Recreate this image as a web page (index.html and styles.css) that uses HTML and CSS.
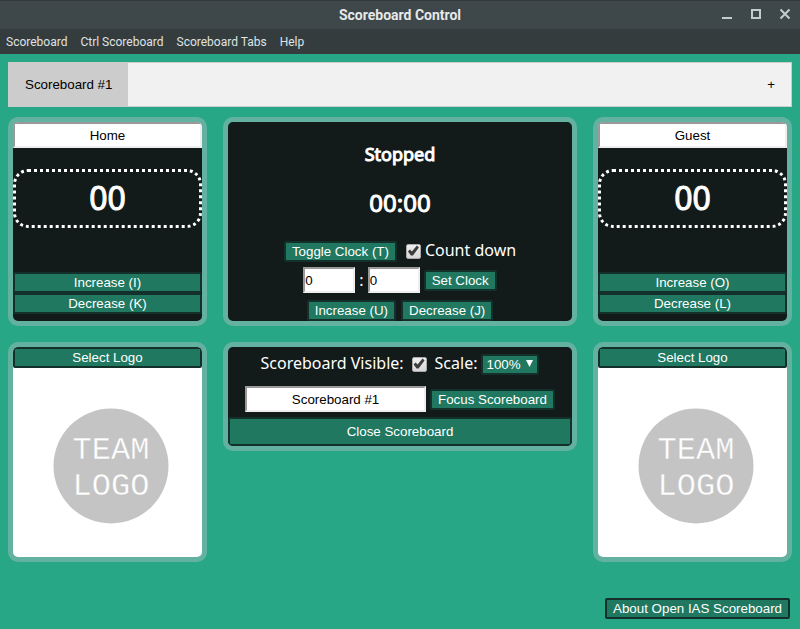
FILE: index.html
```
<!DOCTYPE html>
<html lang="en">
<head>
<meta charset="utf-8">
<title>Scoreboard Control</title>
<link rel="stylesheet" href="styles.css">
</head>
<body>
<header class="titlebar">
  <h1 class="window-title">Scoreboard Control</h1>
  <div class="window-buttons">
    <button type="button" aria-label="Minimize"><svg width="12" height="12" viewBox="0 0 12 12"><path d="M1 10h10" /></svg></button>
    <button type="button" aria-label="Maximize"><svg width="12" height="12" viewBox="0 0 12 12"><path d="M2 2h8v8H2z" /></svg></button>
    <button type="button" aria-label="Close"><svg width="12" height="12" viewBox="0 0 12 12"><path d="M1.5 1.5l9 9M10.5 1.5l-9 9" /></svg></button>
  </div>
</header>
<nav class="menubar">
  <a href="#">Scoreboard</a>
  <a href="#">Ctrl Scoreboard</a>
  <a href="#">Scoreboard Tabs</a>
  <a href="#">Help</a>
</nav>
<main class="content">
  <div class="tabs">
    <button type="button" class="tab active">Scoreboard #1</button>
    <button type="button" class="tab">+</button>
  </div>
  <div class="board">
    <section class="card team">
      <input class="field name" type="text" value="Home" aria-label="Home team name">
      <div class="score">00</div>
      <button type="button" class="btn">Increase (I)</button>
      <button type="button" class="btn">Decrease (K)</button>
    </section>
    <section class="card clock">
      <h3 class="status">Stopped</h3>
      <h2 class="time">00:00</h2>
      <div class="row toggle-row">
        <button type="button" class="btn">Toggle Clock (T)</button>
        <label class="check-label"><input type="checkbox" class="check" checked><span class="label-text">Count down</span></label>
      </div>
      <div class="row set-row">
        <input class="field digits" type="text" value="0" aria-label="Minutes">
        <span>:</span>
        <input class="field digits" type="text" value="0" aria-label="Seconds">
        <button type="button" class="btn">Set Clock</button>
      </div>
      <div class="row step-row">
        <button type="button" class="btn">Increase (U)</button>
        <button type="button" class="btn">Decrease (J)</button>
      </div>
    </section>
    <section class="card team">
      <input class="field name" type="text" value="Guest" aria-label="Guest team name">
      <div class="score">00</div>
      <button type="button" class="btn">Increase (O)</button>
      <button type="button" class="btn">Decrease (L)</button>
    </section>
    <section class="card logo">
      <button type="button" class="btn">Select Logo</button>
      <svg class="logo-image" viewBox="0 0 189 189" role="img" aria-label="Home team logo">
        <circle cx="98" cy="98" r="57.5" />
        <text x="98" y="91">TEAM</text>
        <text x="98" y="127">LOGO</text>
      </svg>
    </section>
    <section class="card view">
      <div class="row view-row">
        <label class="label-text" for="visible">Scoreboard Visible:</label>
        <input type="checkbox" class="check" id="visible" checked>
        <span class="scale">
          <label class="label-text" for="scale">Scale:</label>
          <span class="select-wrap">
            <select id="scale" class="btn"><option>100%</option></select>
            <svg width="7" height="7" viewBox="0 0 7 7"><path d="M0 0h7L3.5 7z" /></svg>
          </span>
        </span>
      </div>
      <div class="row focus-row">
        <input class="field label-field" type="text" value="Scoreboard #1" aria-label="Scoreboard name">
        <button type="button" class="btn">Focus Scoreboard</button>
      </div>
      <button type="button" class="btn close">Close Scoreboard</button>
    </section>
    <section class="card logo">
      <button type="button" class="btn">Select Logo</button>
      <svg class="logo-image" viewBox="0 0 189 189" role="img" aria-label="Guest team logo">
        <circle cx="98" cy="98" r="57.5" />
        <text x="98" y="91">TEAM</text>
        <text x="98" y="127">LOGO</text>
      </svg>
    </section>
  </div>
</main>
<footer class="footer">
  <button type="button" class="btn">About Open IAS Scoreboard</button>
</footer>
</body>
</html>
```
FILE: styles.css
```
* {
  box-sizing: border-box;
}

body {
  margin: 0;
  min-height: 100vh;
  display: flex;
  flex-direction: column;
  background: #27a786;
  color: #fff;
  font: 16px/22px "Noto Sans", sans-serif;
}

button,
input,
select {
  margin: 0;
  font-family: "Liberation Sans", Arial, sans-serif;
}

.titlebar {
  display: grid;
  grid-template-columns: 1fr auto 1fr;
  align-items: center;
  height: 29px;
  padding: 0 9px;
  background: #3e4749;
  border-top: 1px solid #33393b;
}

.window-title {
  grid-column: 2;
  margin: 0;
  font: bold 14px/28px Roboto, sans-serif;
  color: #e6e9e9;
}

.window-buttons {
  display: flex;
  justify-content: flex-end;
  gap: 17px;
}

.window-buttons button {
  display: flex;
  padding: 0 0 2px;
  border: 0;
  background: none;
}

.window-buttons path {
  fill: none;
  stroke: #c3cdd0;
  stroke-width: 2;
}

.menubar {
  display: flex;
  gap: 13px;
  height: 25px;
  padding: 0 6px;
  background: #353c3e;
  font: 12px/26px Roboto, sans-serif;
}

.menubar a {
  color: #dfe3e3;
  text-decoration: none;
}

.content {
  padding: 8px 8px 0;
}

.tabs {
  display: flex;
  justify-content: space-between;
  height: 45px;
  margin-bottom: 10px;
  background: #f1f1f1;
  border: 1px solid #ccc;
}

.tab {
  padding: 0 16px;
  border: 0;
  background: none;
  color: #000;
}

.tab.active {
  background: #ccc;
}

.board {
  display: grid;
  grid-template-columns: 199fr 354fr 199fr;
  gap: 16px;
  align-items: start;
}

.card {
  display: flex;
  flex-direction: column;
  overflow: hidden;
  border: 5px solid #63b1a0;
  border-radius: 10px;
  background: #131b1a;
}

.btn {
  height: 21px;
  padding: 0 6px;
  border: 2px solid #14302a;
  border-radius: 2px;
  background: #1f785f;
  color: #fff;
}

.field {
  height: 26px;
  padding: 0;
  border: 2px solid;
  border-color: #999 #eee #eee #999;
  background: #fff;
  color: #000;
}

.name,
.label-field {
  text-align: center;
}

.team {
  padding-bottom: 7px;
}

.score,
.status,
.time {
  font-weight: 400;
  text-align: center;
  -webkit-text-stroke: 1px #fff;
}

.score {
  margin: 21px 0 44px;
  padding-bottom: 2px;
  border: 3px dotted #fff;
  border-radius: 15px;
  font-size: 32px;
  line-height: 51px;
}

.row {
  display: flex;
  align-items: center;
  justify-content: center;
}

.label-text {
  padding-bottom: 2px;
  line-height: 20px;
}

.clock {
  padding-top: 20px;
}

.status,
.time {
  margin: 0;
}

.status {
  font-size: 18px;
  line-height: 24px;
}

.time {
  margin: 21px 0;
  font-size: 24px;
  line-height: 32px;
}

.toggle-row {
  gap: 9px;
  margin-bottom: 5px;
}

.check-label {
  display: flex;
  align-items: center;
  gap: 4px;
}

.check {
  appearance: none;
  width: 15px;
  height: 15px;
  border: 1px solid #aaa;
  border-radius: 2px;
  background: linear-gradient(#eee, #d8d8d8);
}

.check:checked::before {
  content: "";
  display: block;
  height: 13px;
  background: #3d3d3d;
  clip-path: polygon(1px 7px, 3px 5px, 5px 7px, 10px 1px, 12px 3px, 6px 11px, 4px 11px);
}

.digits {
  width: 52px;
}

.set-row {
  gap: 4px;
  margin-bottom: 7px;
}

.step-row {
  gap: 5px;
}

.view {
  padding-top: 6px;
}

.view-row {
  gap: 8px;
}

.scale {
  display: flex;
  align-items: center;
  gap: 4px;
}

.select-wrap {
  position: relative;
  display: flex;
}

.select-wrap .btn {
  appearance: none;
  width: 58px;
  padding: 0 3px;
}

.select-wrap svg {
  position: absolute;
  top: 6px;
  right: 6px;
  fill: #fff;
  pointer-events: none;
}

.focus-row {
  gap: 4px;
  margin: 11px 0 5px;
}

.label-field {
  width: 181px;
}

.close {
  height: 29px;
}

.logo {
  background: #fff;
}

.logo-image {
  display: block;
  width: 100%;
}

.logo-image circle {
  fill: #c4c4c4;
}

.logo-image text {
  fill: #fff;
  stroke: #c4c4c4;
  stroke-width: 0.4px;
  font: 32px "Liberation Mono", monospace;
  text-anchor: middle;
}

.footer {
  display: flex;
  justify-content: flex-end;
  margin-top: auto;
  padding: 10px;
}
```
